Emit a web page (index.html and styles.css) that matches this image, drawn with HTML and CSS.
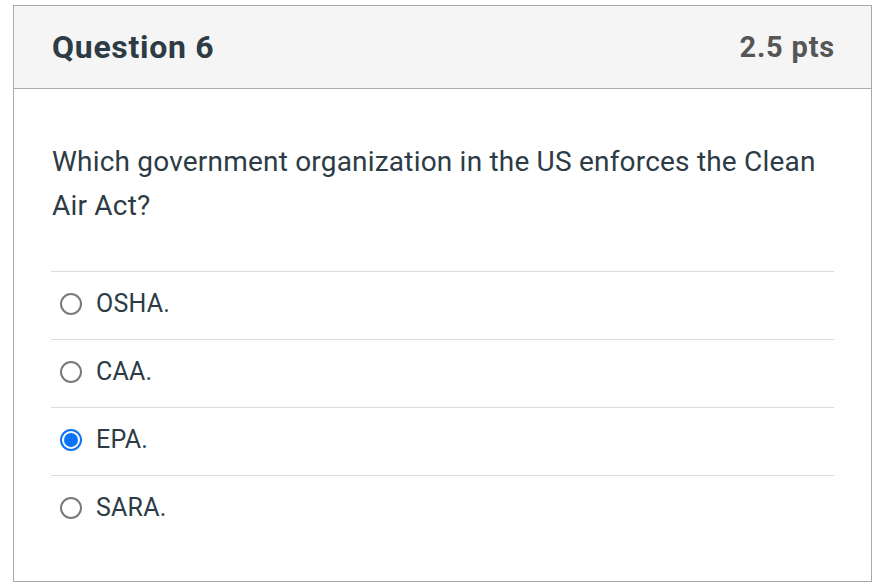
FILE: index.html
```html
<!DOCTYPE html>
<html lang="en">
<head>
<meta charset="utf-8">
<title>Question 6</title>
<link rel="stylesheet" href="styles.css">
</head>
<body>
<div class="card">
  <div class="card-header">
    <h2 class="title">Question 6</h2>
    <span class="pts">2.5 pts</span>
  </div>
  <div class="card-body">
    <p class="question">Which government organization in the US enforces the Clean Air Act?</p>
    <div class="answers">
      <label class="answer"><span class="radio"></span><span class="label">OSHA.</span></label>
      <label class="answer"><span class="radio"></span><span class="label">CAA.</span></label>
      <label class="answer"><span class="radio checked"></span><span class="label">EPA.</span></label>
      <label class="answer"><span class="radio"></span><span class="label">SARA.</span></label>
    </div>
  </div>
</div>
</body>
</html>
```
FILE: styles.css
```css
* { box-sizing: border-box; }
html, body { margin: 0; padding: 0; background: #ffffff; }
body {
  font-family: Roboto, "Liberation Sans", Arial, sans-serif;
  color: #2d3b45;
  padding: 5px 0 0 13px;
}
.card {
  width: 859px;
  height: 577px;
  border: 1px solid #a9a9a9;
  display: flex;
  flex-direction: column;
}
.card-header {
  height: 83px;
  background: #f5f5f5;
  border-bottom: 1px solid #a9a9a9;
  display: flex;
  align-items: center;
  justify-content: space-between;
  padding: 0 37px 0 38px;
}
.title {
  margin: 0;
  font-size: 32px;
  letter-spacing: 0.7px;
  font-weight: 700;
  color: #2d3b45;
  line-height: 1;
}
.pts {
  font-size: 29px;
  letter-spacing: 0.8px;
  font-weight: 700;
  color: #565656;
  line-height: 1;
  margin-right: -1px;
}
.card-body {
  padding: 51px 37px 0 37px;
}
.question {
  margin: 0 0 43px 1px;
  font-size: 28px;
  letter-spacing: 0.2px;
  line-height: 44px;
}
.answers { display: flex; flex-direction: column; }
.answer {
  height: 68px;
  border-top: 1px solid #dcdcdc;
  display: flex;
  align-items: center;
  padding: 0 0 3px 9px;
  gap: 14px;
}
.radio {
  width: 22px;
  height: 22px;
  border-radius: 50%;
  border: 2px solid #7a7a7a;
  flex: none;
  position: relative;
}
.radio.checked {
  border: 2px solid #0b74f5;
}
.radio.checked::after {
  content: "";
  position: absolute;
  left: 2px; top: 2px; right: 2px; bottom: 2px;
  border-radius: 50%;
  background: #0b74f5;
}
.label {
  font-size: 25px;
  letter-spacing: 0.2px;
  color: #2d3b45;
  margin-top: -2px;
}
```
